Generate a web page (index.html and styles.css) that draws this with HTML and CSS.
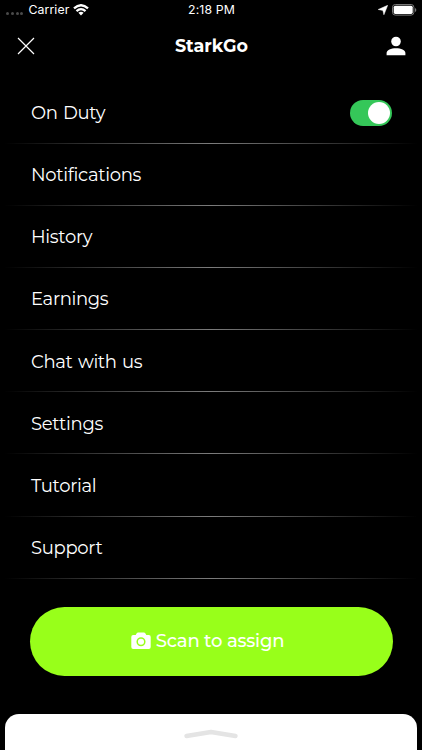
FILE: index.html
```
<!DOCTYPE html>
<html lang="en">
<head>
<meta charset="utf-8">
<title>StarkGo</title>
<link rel="stylesheet" href="styles.css">
</head>
<body>
<main class="screen">
  <div class="status">
    <div class="status-left">
      <span class="signal"><i></i><i></i><i></i><i></i></span>
      <span class="carrier">Carrier</span>
      <svg class="wifi" width="16" height="12" viewBox="0 0 16 12" fill="none" stroke="#fff" stroke-width="2.3"><path d="M1 4.4Q8-2 15 4.4M3.5 7.1Q8 3.1 12.5 7.1"/><path d="M5.4 8.8Q8 6.7 10.6 8.8L8 11.5Z" fill="#fff" stroke="none"/></svg>
    </div>
    <span class="time">2:18 PM</span>
    <div class="status-right">
      <svg width="10" height="10" viewBox="0 0 10 10" fill="#fff"><path d="M9.7.3 5.9 9.8 4.9 5.4.2 4.5Z" stroke="#fff" stroke-width=".5"/></svg>
      <svg width="25" height="12" viewBox="0 0 25 12"><rect x=".5" y=".5" width="21.4" height="10.6" rx="2.8" fill="none" stroke="#777"/><rect x="1.7" y="1.7" width="19" height="8.2" rx="1.6" fill="#fff"/><path d="M23 4v4q1.3-.5 1.3-2T23 4" fill="#777"/></svg>
    </div>
  </div>
  <header class="header">
    <svg class="close" width="18" height="18" viewBox="0 0 18 18" fill="none" stroke="#fff" stroke-width="1.15"><path d="m1 1 16 16M17 1 1 17"/></svg>
    <h1>StarkGo</h1>
    <svg class="user" width="20" height="20" viewBox="0 0 20 20" fill="#fff"><circle cx="10" cy="5.5" r="4.8"/><path d="M.6 19.3v-2.2C.6 13.9 5 12.3 10 12.3s9.4 1.6 9.4 4.8v2.2Z"/></svg>
  </header>
  <nav class="menu">
    <div class="row"><span>On Duty</span><span class="toggle"><i></i></span></div>
    <div class="row"><span>Notifications</span></div>
    <div class="row"><span>History</span></div>
    <div class="row"><span>Earnings</span></div>
    <div class="row"><span>Chat with us</span></div>
    <div class="row"><span>Settings</span></div>
    <div class="row"><span>Tutorial</span></div>
    <div class="row"><span>Support</span></div>
  </nav>
  <button class="scan">
    <svg width="20" height="18" viewBox="0 0 20 18"><path d="M2.2 3h2.5l1.2-2Q6.3.5 7 .5h6q.7 0 1.1.5l1.2 2h2.5Q19.7 3 19.7 5v10q0 2-1.9 2H2.2Q.3 17 .3 15V5q0-2 1.9-2Z" fill="#fff"/><circle cx="10" cy="9.8" r="3.8" fill="none" stroke="#98ff1a" stroke-width="1.5"/></svg>
    <span>Scan to assign</span>
  </button>
  <footer class="sheet">
    <svg width="54" height="10" viewBox="0 0 54 10" fill="none" stroke="#e4e4e4" stroke-width="4.4" stroke-linecap="round" stroke-linejoin="round"><path d="M2.5 7 27 3l24.5 4"/></svg>
  </footer>
</main>
</body>
</html>
```
FILE: styles.css
```
* { box-sizing: border-box; }
body { margin: 0; background: #000; }
.screen {
  display: flex;
  flex-direction: column;
  width: 422px;
  height: 750px;
  overflow: hidden;
  background: #000;
  color: #fff;
  font-family: Montserrat, Inter, sans-serif;
}
svg { display: block; flex: none; }
.status {
  display: grid;
  grid-template-columns: 1fr auto 1fr;
  align-items: center;
  height: 20px;
  padding: 0 5px 0 6px;
  font: 12.3px/20px Inter, sans-serif;
  letter-spacing: .1px;
}
.status-left, .status-right { display: flex; align-items: center; }
.status-right { justify-content: flex-end; gap: 4px; }
.signal { display: flex; gap: 1.8px; margin: 7px 5px 0 0; }
.signal i { width: 3px; height: 3px; border-radius: 50%; background: #4a4a4a; }
.wifi { margin-left: 4px; }
.header {
  display: grid;
  grid-template-columns: 1fr auto 1fr;
  align-items: center;
  height: 52px;
  padding: 0 16px 0 17px;
}
.header h1 { margin: 0; font-size: 17.5px; line-height: 22px; font-weight: 700; }
.user { justify-self: end; }
.menu { padding: 10px 0 0; }
.row {
  display: flex;
  align-items: center;
  justify-content: space-between;
  height: 62.14px;
  padding: 0 30px 0 31px;
  font-size: 18px;
  font-weight: 400;
  letter-spacing: -.32px;
  word-spacing: 1px;
  background: linear-gradient(90deg, transparent 1%, #7c7c7c 50%, transparent 99%) bottom / 100% 1.3px no-repeat;
}
.toggle {
  display: flex;
  justify-content: flex-end;
  width: 42px;
  height: 26px;
  margin-bottom: 1px;
  padding: 2px;
  border-radius: 13px;
  background: #35c759;
}
.toggle i { width: 22px; height: 22px; border-radius: 50%; background: #fff; }
.scan {
  display: flex;
  align-items: center;
  justify-content: center;
  gap: 5px;
  flex: none;
  width: 363px;
  height: 69.5px;
  margin: 27.5px 0 0 29.5px;
  padding: 0 7px 0 0;
  border: 0;
  border-radius: 35px;
  background: #98ff1a;
  color: #fff;
  font: 500 18px Montserrat, Inter, sans-serif;
  letter-spacing: -.2px;
}
.sheet {
  display: flex;
  justify-content: center;
  flex: none;
  height: 36px;
  margin: auto 5.4px 0;
  padding-top: 15px;
  border-radius: 14px 14px 0 0;
  background: #fff;
}
```
